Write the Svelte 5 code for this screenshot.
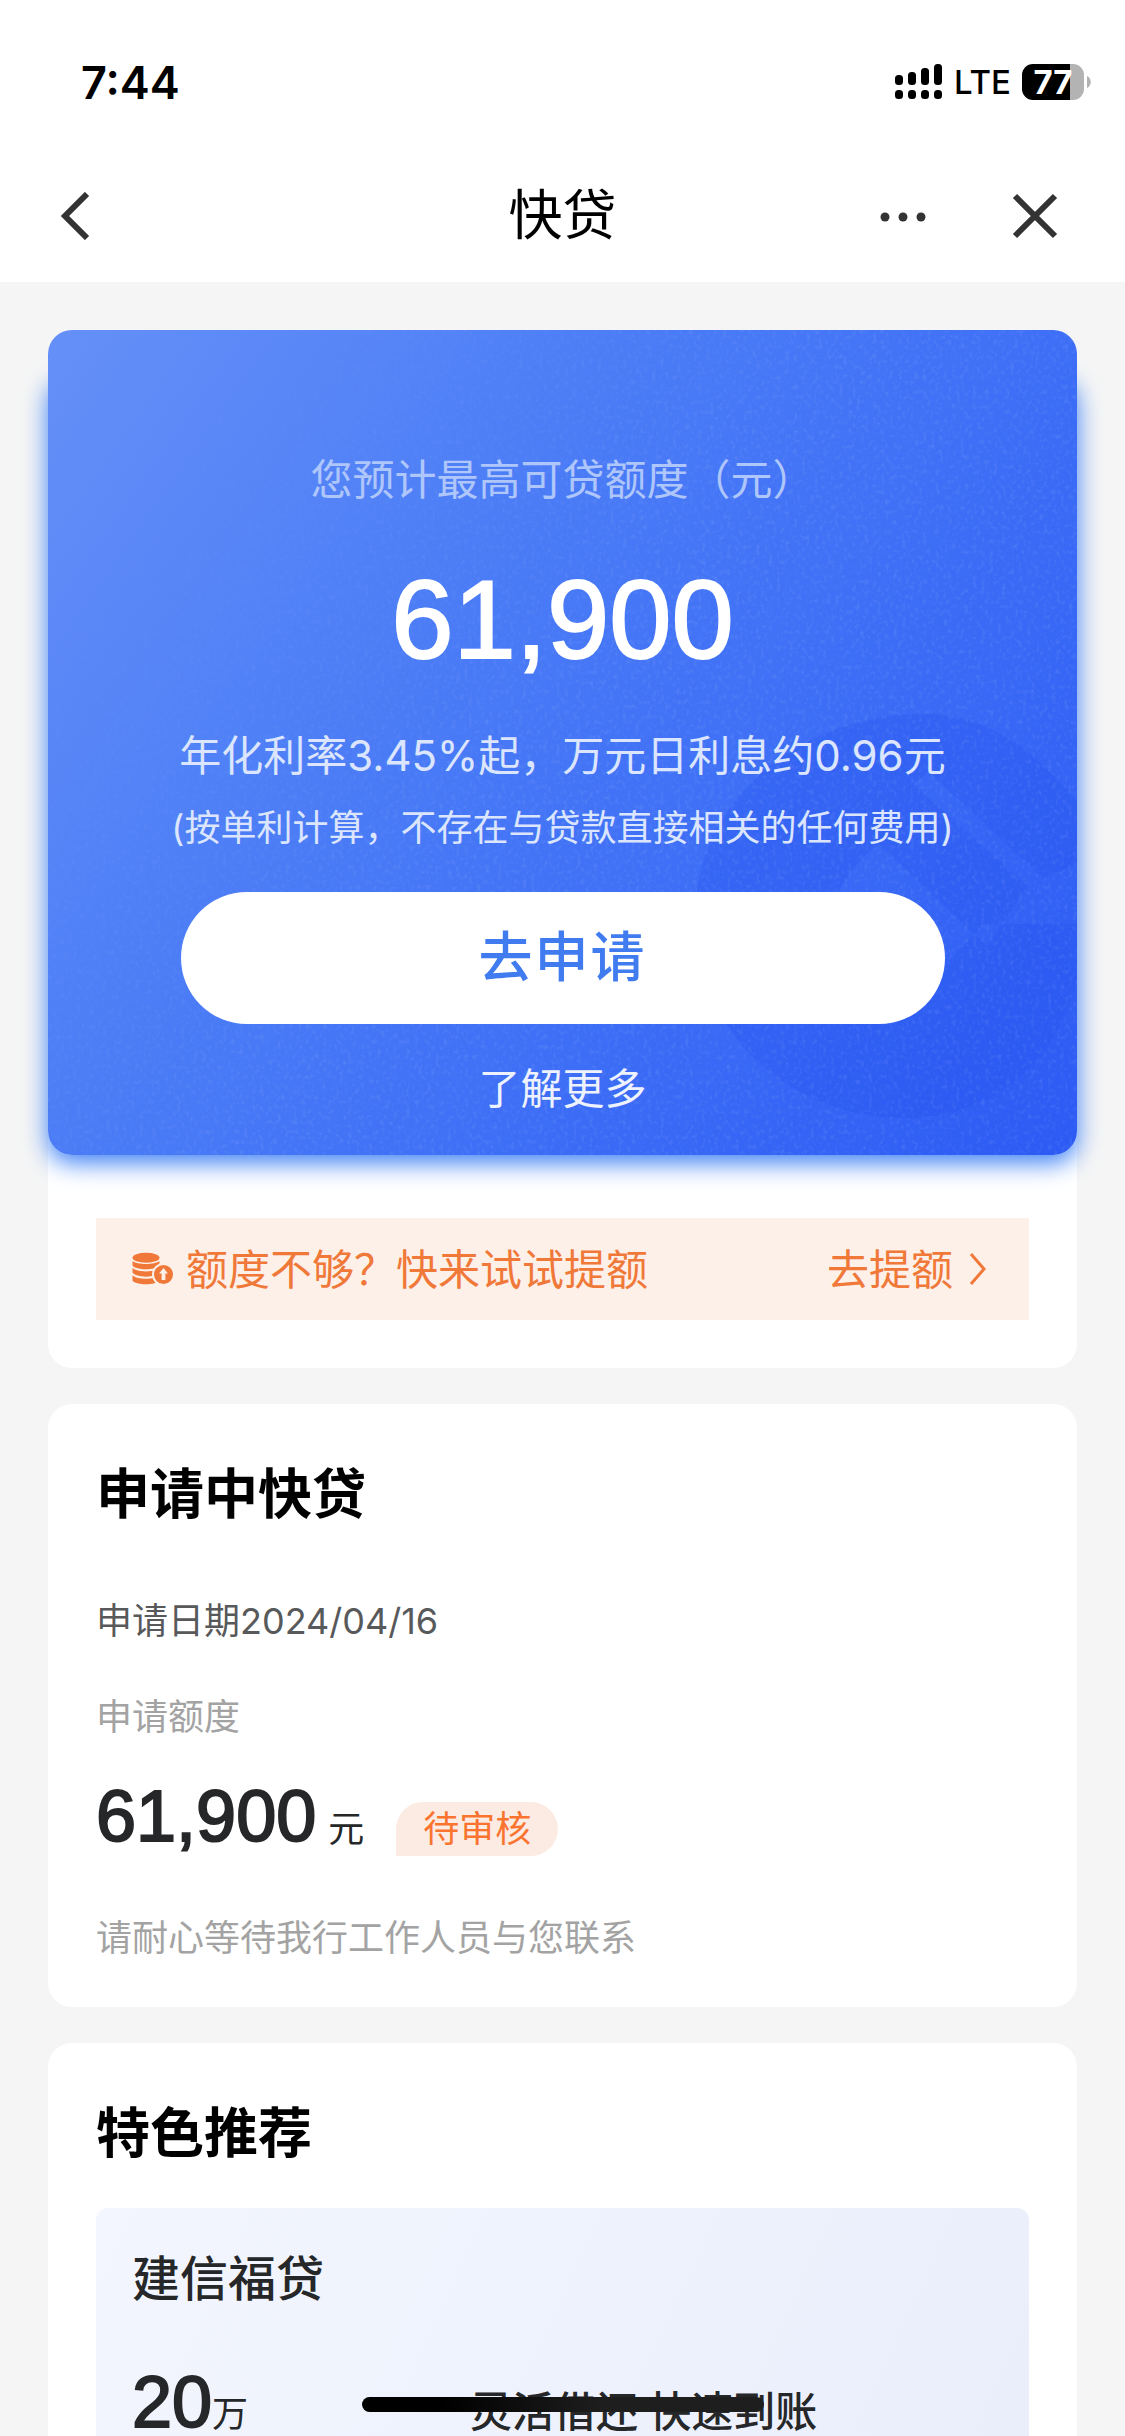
<script lang="ts">
	interface Offer {
		name: string;
		amount: string;
		unit: string;
		slogan: string;
	}

	const quota = '61,900';
	const offers: Offer[] = [
		{ name: '建信福贷', amount: '20', unit: '万', slogan: '灵活借还 快速到账' }
	];

	// signal bars: x and top of each bar, the lower dots share the same x
	const bars = [
		{ x: 0, y: 11 },
		{ x: 13, y: 8 },
		{ x: 26, y: 4 },
		{ x: 39, y: 0 }
	];
</script>

<div class="page">
	<header>
		<div class="status">
			<span class="time">7:44</span>
			<div class="indicators">
				<svg width="47" height="36" viewBox="0 0 47 36" aria-hidden="true">
					{#each bars as bar}
						<rect x={bar.x} y={bar.y} width="8" height={21 - bar.y} rx="3.5" />
						<rect x={bar.x} y="26" width="8" height="9" rx="3.5" />
					{/each}
				</svg>
				<span class="network">LTE</span>
				<div class="battery">
					<span class="level">77</span>
					<svg width="4" height="12" viewBox="0 0 4 12" aria-hidden="true">
						<path d="M0 0C5 2 5 10 0 12Z" fill="#b3b3b3" />
					</svg>
				</div>
			</div>
		</div>

		<nav>
			<button class="icon back" aria-label="返回">
				<svg width="30" height="48" viewBox="0 0 30 48">
					<path d="M27 2L5 24L27 46" />
				</svg>
			</button>
			<h1>快贷</h1>
			<div class="tools">
				<button class="icon" aria-label="更多">
					<svg width="48" height="48" viewBox="0 0 48 48">
						<g class="dots">
							<circle cx="6" cy="25" r="4.5" />
							<circle cx="24" cy="25" r="4.5" />
							<circle cx="42" cy="25" r="4.5" />
						</g>
					</svg>
				</button>
				<button class="icon" aria-label="关闭">
					<svg width="54" height="48" viewBox="0 0 54 48">
						<path d="M4 4L44 44M44 4L4 44" />
					</svg>
				</button>
			</div>
		</nav>
	</header>

	<main>
		<section class="card quota">
			<div class="hero">
				<svg class="mark" width="382" height="404" viewBox="0 0 382 404" aria-hidden="true">
					<path
						fill-rule="evenodd"
						d="M232 0C295 0 345 42 382 88V150L348 164L234 58L218 70L332 172L292 232L184 130C162 146 140 172 136 206C132 256 180 276 240 264L262 238L290 210H382V262C366 344 300 404 210 404C95 404 0 318 0 204C0 90 100 0 232 0Z"
					/>
				</svg>
				<svg class="grain" aria-hidden="true">
					<filter id="grain">
						<feTurbulence type="fractalNoise" baseFrequency="0.24 0.2" numOctaves="3" seed="4" />
						<feColorMatrix values="0 0 0 0 1  0 0 0 0 1  0 0 0 0 1  3 0 0 0 -1.5" />
					</filter>
					<rect width="100%" height="100%" filter="url(#grain)" />
				</svg>
				<p class="caption">您预计最高可贷额度（元）</p>
				<strong class="total">{quota}</strong>
				<p class="rate">年化利率3.45%起，万元日利息约0.96元</p>
				<p class="note">(按单利计算，不存在与贷款直接相关的任何费用)</p>
				<button class="apply">去申请</button>
				<a class="more" href="#more">了解更多</a>
			</div>

			<a class="raise" href="#raise">
				<svg width="42" height="34" viewBox="0 0 42 34" aria-hidden="true">
					<g fill="#f07838">
						<ellipse cx="14" cy="5.8" rx="13.5" ry="5" />
						<path d="M0.5 9C5 13 23 13 27.5 9V13.5C24 18.5 4 18.5 0.5 13.5Z" />
						<path d="M0.5 16C5 20.5 23 20.5 27.5 16V20.5C24 26 4 26 0.5 20.5Z" />
						<path d="M0.5 23.2C5 28 23 28 27.5 23.2V28.5C24 33.5 4 33.5 0.5 28.5Z" />
					</g>
					<circle cx="31.5" cy="22.5" r="10.5" fill="#f07838" stroke="#fdf0e8" stroke-width="2" />
					<path d="M31.5 16L36 21.5H33.4V28H29.6V21.5H27Z" fill="#fdf0e8" />
				</svg>
				<span>额度不够？快来试试提额</span>
				<span class="go">去提额</span>
				<svg width="18" height="34" viewBox="0 0 18 34" aria-hidden="true">
					<path d="M2 2L15 17L2 32" fill="none" stroke="#f07838" stroke-width="3" />
				</svg>
			</a>
		</section>

		<section class="card pending">
			<h2>申请中快贷</h2>
			<p class="date">申请日期2024/04/16</p>
			<p class="muted">申请额度</p>
			<div class="amount">
				<strong>{quota}</strong>
				<span class="yuan">元</span>
				<span class="badge">待审核</span>
			</div>
			<p class="muted">请耐心等待我行工作人员与您联系</p>
		</section>

		<section class="card featured">
			<h2>特色推荐</h2>
			{#each offers as offer}
				<article>
					<h3>{offer.name}</h3>
					<div class="line">
						<span class="figure"><b>{offer.amount}</b>{offer.unit}</span>
						<span class="slogan">{offer.slogan}</span>
					</div>
				</article>
			{/each}
		</section>
	</main>

	<div class="home-bar"></div>
</div>

<style>
	:global(body) {
		margin: 0;
		background: #f5f5f5;
	}

	.page {
		position: relative;
		height: 100vh;
		overflow: hidden;
		font-family: Inter, 'Noto Sans CJK SC', sans-serif;
		color: #262729;
	}

	p,
	h1,
	h2,
	h3 {
		margin: 0;
	}

	button {
		padding: 0;
		border: 0;
		font: inherit;
	}

	a {
		text-decoration: none;
	}

	svg {
		display: block;
		flex: none;
	}

	header {
		background: #fff;
	}

	.status {
		display: flex;
		align-items: center;
		justify-content: space-between;
		height: 164px;
		padding: 0 34px 0 81px;
		color: #000;
	}

	.time {
		font-size: 45px;
		font-weight: 600;
	}

	.indicators {
		display: flex;
		align-items: center;
	}

	.network {
		margin: 0 11px 0 12px;
		font-size: 33px;
		font-weight: 500;
	}

	.battery {
		display: flex;
		align-items: center;
		gap: 3px;
	}

	.level {
		width: 62px;
		border-radius: 11px;
		background: linear-gradient(to right, #000 77%, #b3b3b3 77%);
		font-size: 33px;
		font-weight: 700;
		line-height: 36px;
		text-align: center;
		color: #fff;
	}

	nav {
		display: grid;
		grid-template-columns: 1fr auto 1fr;
		align-items: center;
		height: 104px;
		padding: 0 60px 14px;
	}

	h1 {
		font-size: 54px;
		font-weight: 400;
		line-height: 104px;
		color: #000;
	}

	.icon {
		background: none;
		fill: none;
		stroke: #333;
		stroke-width: 6;
	}

	.back {
		justify-self: start;
	}

	.tools {
		display: flex;
		justify-content: flex-end;
		gap: 84px;
	}

	.dots {
		fill: #333;
		stroke: none;
	}

	main {
		display: flex;
		flex-direction: column;
		gap: 36px;
		padding: 48px;
	}

	.card {
		padding: 51px 48px 39px;
		border-radius: 24px;
		background: #fff;
	}

	.quota {
		isolation: isolate;
		padding: 0 0 48px;
	}

	.hero {
		position: relative;
		display: flex;
		flex-direction: column;
		align-items: center;
		padding: 116px 0 32px;
		border-radius: 24px;
		background: linear-gradient(125deg, #6690f8 0%, #4f80f6 30%, #3e6ff6 62%, #2c5af4 100%);
		color: #dbe5fd;
	}

	/* glow starts below the top edge */
	.hero::before {
		content: '';
		position: absolute;
		inset: 42px 0 0;
		z-index: -1;
		border-radius: 24px;
		box-shadow: 0 8px 24px #3d80f5;
	}

	.hero > * {
		position: relative;
	}

	.hero .mark {
		position: absolute;
		right: 0;
		top: 384px;
		fill: #2450f0;
		opacity: 0.25;
	}

	.hero .grain {
		position: absolute;
		inset: 0;
		width: 100%;
		height: 100%;
		border-radius: 24px;
		opacity: 0.08;
		mask-image: linear-gradient(125deg, transparent 10%, #000 50%);
	}

	.caption {
		font-size: 42px;
		line-height: 68px;
		color: #afc6fb;
	}

	.total,
	.amount strong,
	.figure b {
		font-family: 'Liberation Sans', sans-serif;
		font-weight: 400;
		-webkit-text-stroke: 2px currentColor;
	}

	.total {
		margin-top: 46px;
		font-size: 112px;
		line-height: 120px;
		color: #fff;
	}

	.rate {
		margin-top: 42px;
		font-size: 42px;
		line-height: 68px;
	}

	.note {
		margin-top: 6px;
		font-size: 36px;
		line-height: 64px;
	}

	.apply {
		width: 764px;
		max-width: 80%;
		margin-top: 32px;
		border-radius: 66px;
		background: #fff;
		font-size: 54px;
		font-weight: 500;
		letter-spacing: 2px;
		line-height: 132px;
		color: #407cf0;
	}

	.more {
		margin-top: 31px;
		font-size: 42px;
		line-height: 68px;
		color: #edf2fe;
	}

	.raise {
		display: flex;
		align-items: center;
		height: 102px;
		margin: 63px 48px 0;
		padding: 0 42px 0 36px;
		background: #fdf0e8;
		font-size: 42px;
		color: #f07838;
	}

	.raise span {
		margin-left: 12px;
		padding-bottom: 6px;
	}

	.raise .go {
		margin: 0 16px 0 auto;
	}

	h2 {
		font-size: 54px;
		font-weight: 700;
		line-height: 80px;
		color: #000;
	}

	.date,
	.muted {
		font-size: 36px;
		line-height: 60px;
		color: #58595b;
	}

	.muted {
		color: #a3a3a3;
	}

	.pending .date {
		margin: 56px 0 36px;
	}

	.amount {
		display: flex;
		align-items: flex-end;
		height: 72px;
		margin: 37px 0 52px;
	}

	.amount strong {
		font-size: 72px;
		line-height: 80px;
	}

	.yuan {
		margin: 0 32px 0 12px;
		font-size: 36px;
		line-height: 54px;
	}

	.badge {
		padding: 0 27px;
		border-radius: 27px 27px 27px 0;
		background: #fcebe2;
		font-size: 36px;
		line-height: 54px;
		color: #fa7430;
	}

	article {
		margin-top: 34px;
		padding: 36px;
		border-radius: 12px;
		background: linear-gradient(115deg, #f3f6fe, #eaeefb);
	}

	h3 {
		font-size: 48px;
		font-weight: 500;
		line-height: 70px;
	}

	.line {
		display: grid;
		grid-template-columns: 338px 1fr;
		align-items: baseline;
		margin-top: 44px;
		font-size: 42px;
		line-height: 88px;
	}

	.figure {
		font-size: 36px;
	}

	.figure b {
		font-size: 72px;
	}

	.slogan {
		font-weight: 500;
	}

	.home-bar {
		position: absolute;
		left: 50%;
		bottom: 24px;
		width: 402px;
		height: 15px;
		border-radius: 8px;
		background: linear-gradient(to right, #000 20%, #1e1e1e 60%);
		transform: translateX(-50%);
	}
</style>
